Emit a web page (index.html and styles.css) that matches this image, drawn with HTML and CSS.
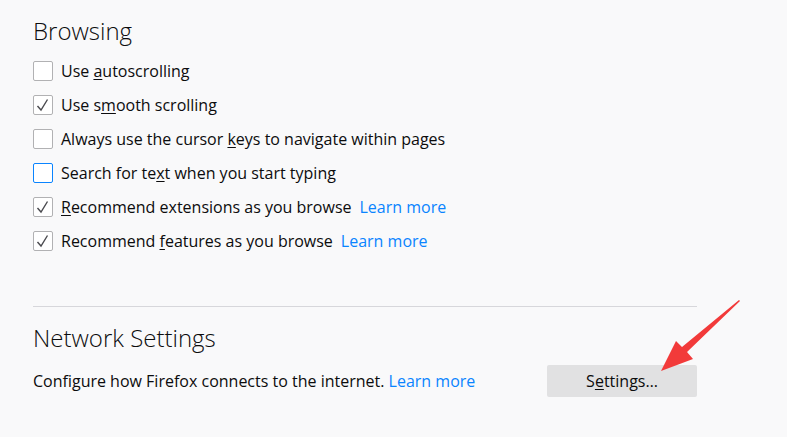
FILE: index.html
```html
<!DOCTYPE html>
<html>
<head>
<meta charset="utf-8">
<link rel="stylesheet" href="styles.css">
</head>
<body>
<div class="page">
  <section class="group">
    <h2 class="heading">Browsing</h2>
    <label class="row"><span class="box"></span><span>Use <u>a</u>utoscrolling</span></label>
    <label class="row"><span class="box checked"><svg viewBox="0 0 18 18"><path d="M3.5 10 L7 14 L13.5 3.5" /></svg></span><span>Use s<u>m</u>ooth scrolling</span></label>
    <label class="row"><span class="box"></span><span>Always use the cursor <u>k</u>eys to navigate within pages</span></label>
    <label class="row"><span class="box focused"></span><span>Search for te<u>x</u>t when you start typing</span></label>
    <label class="row"><span class="box checked"><svg viewBox="0 0 18 18"><path d="M3.5 10 L7 14 L13.5 3.5" /></svg></span><span><u>R</u>ecommend extensions as you browse</span><a class="link spaced">Learn more</a></label>
    <label class="row"><span class="box checked"><svg viewBox="0 0 18 18"><path d="M3.5 10 L7 14 L13.5 3.5" /></svg></span><span>Recommend <u>f</u>eatures as you browse</span><a class="link spaced">Learn more</a></label>
  </section>
  <hr class="sep">
  <section class="group">
    <h2 class="heading">Network Settings</h2>
    <div class="net-row">
      <span>Configure how Firefox connects to the internet. <a class="link">Learn more</a></span>
      <button class="btn">S<u>e</u>ttings…</button>
    </div>
  </section>
  <svg class="arrow" width="100" height="90" viewBox="0 0 100 90">
    <path d="M81 1 L82 2 L29 53 L35 60 L3 72 L18 42 L24 48 Z" fill="#f23a3a"/>
  </svg>
</div>
</body>
</html>
```
FILE: styles.css
```css
html, body {
  margin: 0;
  padding: 0;
  background: #f9f9fa;
}
body {
  font-family: "Open Sans", "Noto Sans", sans-serif;
  font-size: 16px;
  color: #0c0c0d;
}
.page {
  position: relative;
  width: 664px;
  padding: 16px 0 0 33px;
  height: 421px;
}
.heading {
  margin: 0;
  font-size: 24px;
  font-weight: 300;
  line-height: 30px;
}
.row {
  display: flex;
  align-items: center;
  height: 34px;
}
.row:first-of-type {
  margin-top: 8px;
}
.box {
  width: 18px;
  height: 18px;
  border: 1px solid #b1b1b3;
  border-radius: 2px;
  background: #fff;
  margin-right: 8px;
  flex: none;
  display: flex;
}
.box svg {
  width: 18px;
  height: 18px;
}
.box path {
  fill: none;
  stroke: #4a4a4f;
  stroke-width: 1.4;
}
.box.focused {
  border-color: #0a84ff;
}
u {
  text-decoration-thickness: 1px;
  text-underline-offset: 2px;
}
.link {
  color: #0a84ff;
  text-decoration: none;
}
.spaced {
  margin-left: 8px;
}
.sep {
  border: 0;
  border-top: 1px solid #d7d7db;
  margin: 48px 0 0 0;
  height: 0;
}
.sep + .group .heading {
  margin-top: 16px;
}
.net-row {
  display: flex;
  align-items: center;
  justify-content: space-between;
  margin-top: 12px;
}
.btn {
  width: 150px;
  height: 32px;
  border: 0;
  border-radius: 2px;
  background: #e1e1e2;
  font: inherit;
  color: #0c0c0d;
  padding: 0;
}
.arrow {
  position: absolute;
  left: 658px;
  top: 299px;
}
```
